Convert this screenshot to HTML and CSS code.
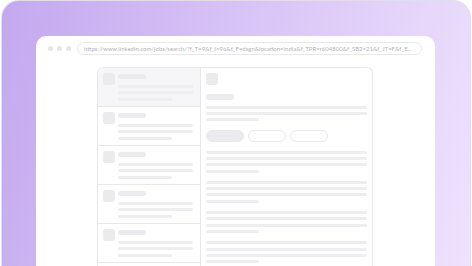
FILE: index.html
```html
<!DOCTYPE html>
<html>
<head>
<meta charset="utf-8">
<link rel="stylesheet" href="styles.css">
</head>
<body>
<div class="stage">
  <div class="card">
    <div class="browser">
      <div class="toolbar">
        <div class="dots"><span class="dot"></span><span class="dot"></span><span class="dot"></span></div>
        <div class="url">https://www.linkedin.com/jobs/search/?f_T=9&amp;f_I=96&amp;f_F=dsgn&amp;location=india&amp;f_TPR=r604800&amp;f_SB2=21&amp;f_JT=F&amp;f_E...</div>
      </div>
      <div class="app">
        <div class="list">
          <div class="item active">
            <div class="avatar"></div>
            <div class="text"><div class="title"></div><div class="line"></div><div class="line"></div><div class="line short"></div></div>
          </div>
          <div class="item">
            <div class="avatar"></div>
            <div class="text"><div class="title"></div><div class="line"></div><div class="line"></div><div class="line short"></div></div>
          </div>
          <div class="item">
            <div class="avatar"></div>
            <div class="text"><div class="title"></div><div class="line"></div><div class="line"></div><div class="line short"></div></div>
          </div>
          <div class="item">
            <div class="avatar"></div>
            <div class="text"><div class="title"></div><div class="line"></div><div class="line"></div><div class="line short"></div></div>
          </div>
          <div class="item">
            <div class="avatar"></div>
            <div class="text"><div class="title"></div><div class="line"></div><div class="line"></div><div class="line short"></div></div>
          </div>
        </div>
        <div class="detail">
          <div class="logo"></div>
          <div class="dtitle"></div>
          <div class="group"><div class="line"></div><div class="line"></div><div class="line short"></div></div>
          <div class="buttons"><span class="btn filled"></span><span class="btn"></span><span class="btn"></span></div>
          <div class="group"><div class="line"></div><div class="line"></div><div class="line"></div><div class="line short"></div></div>
          <div class="group"><div class="line"></div><div class="line"></div><div class="line"></div><div class="line short"></div></div>
          <div class="group"><div class="line"></div><div class="line"></div><div class="line"></div><div class="line short"></div></div>
          <div class="group"><div class="line"></div><div class="line"></div><div class="line"></div><div class="line short"></div></div>
        </div>
      </div>
    </div>
  </div>
</div>
</body>
</html>
```

FILE: styles.css
```css
html, body {
  margin: 0;
  padding: 0;
  background: #ffffff;
  overflow: hidden;
  width: 472px;
  height: 266px;
}
.stage {
  padding-left: 1px;
  height: 266px;
  overflow: hidden;
}
.card {
  box-sizing: border-box;
  width: 470px;
  height: 266px;
  overflow: hidden;
  border: 1px solid #e2dde9;
  border-bottom: none;
  border-radius: 18px 18px 0 0;
  background: linear-gradient(105deg, #c3a8ef 0%, #d8c3f6 45%, #eee2fd 100%);
  padding: 35px 0 0 34px;
}
.browser {
  width: 399px;
  height: 230px;
  overflow: hidden;
  background: #ffffff;
  border-radius: 10px 10px 0 0;
  padding-top: 6px;
  box-sizing: border-box;
}
.toolbar {
  display: flex;
  align-items: center;
  padding: 0 13px 0 12px;
  height: 13px;
}
.dots {
  display: flex;
  gap: 4px;
  margin-right: 6px;
}
.dot {
  width: 5px;
  height: 5px;
  border-radius: 50%;
  background: #e6e6e8;
}
.url {
  flex: 1;
  box-sizing: border-box;
  height: 13px;
  border: 1px solid #e8e8ea;
  border-radius: 7px;
  padding: 0 6px;
  font-family: Lato, "Liberation Sans", sans-serif;
  font-size: 6px;
  line-height: 11px;
  color: #b4b4b8;
  white-space: nowrap;
  overflow: hidden;
}
.app {
  width: 276px;
  box-sizing: border-box;
  margin: 12px 0 0 61px;
  border: 1px solid #e8e8ea;
  border-bottom: none;
  border-radius: 6px 6px 0 0;
  display: grid;
  grid-template-columns: 103px 1fr;
  overflow: hidden;
  height: 200px;
}
.list {
  border-right: 1px solid #e8e8ea;
}
.item {
  display: flex;
  gap: 3px;
  padding: 5px 6px 0 5px;
  height: 33px;
  border-bottom: 1px solid #e8e8ea;
}
.item.active {
  background: #f6f6f8;
}
.avatar {
  width: 12px;
  height: 12px;
  border-radius: 3px;
  background: #ebebed;
  flex: none;
}
.text {
  flex: 1;
  display: flex;
  flex-direction: column;
  gap: 3.2px;
  padding-top: 1px;
}
.title {
  width: 28px;
  height: 5px;
  border-radius: 3px;
  background: #ebebed;
  margin-bottom: 3px;
}
.line {
  height: 3px;
  border-radius: 2px;
  background: #eeeef0;
}
.text .line {
  width: 75px;
}
.text .line.short {
  width: 54px;
}
.detail {
  padding: 5px 5px 0 5px;
  display: flex;
  flex-direction: column;
}
.logo {
  width: 12px;
  height: 12px;
  border-radius: 3px;
  background: #ebebed;
}
.dtitle {
  width: 28px;
  height: 6px;
  border-radius: 3px;
  background: #ebebed;
  margin-top: 9px;
}
.group {
  display: flex;
  flex-direction: column;
  gap: 3.2px;
  margin-top: 8.6px;
}
.dtitle + .group {
  margin-top: 6px;
}
.group .line.short {
  width: 53px;
}
.buttons {
  display: flex;
  gap: 4.5px;
  margin-top: 8.6px;
}
.btn {
  box-sizing: border-box;
  width: 37.5px;
  height: 12.4px;
  border-radius: 7px;
  border: 1px solid #e8e8ea;
}
.btn.filled {
  background: #ebebed;
  border-color: #ebebed;
}
```
